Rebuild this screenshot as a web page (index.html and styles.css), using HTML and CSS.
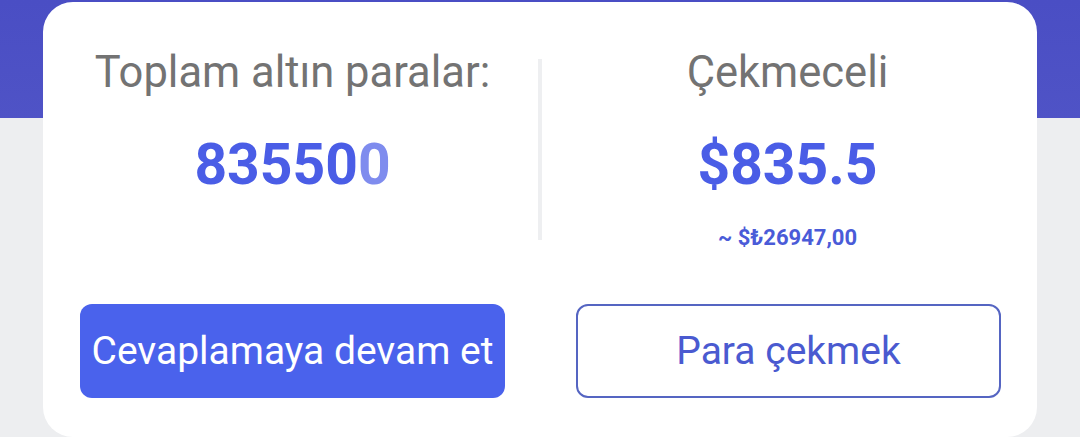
FILE: index.html
```html
<!DOCTYPE html>
<html lang="tr">
<head>
  <meta charset="UTF-8">
  <title>Altın paralar</title>
  <link rel="stylesheet" href="styles.css">
</head>
<body>
  <div class="card">
    <div class="stats">
      <div class="stat">
        <p class="stat-label">Toplam altın paralar:</p>
        <p class="stat-value">83550<span class="fade">0</span></p>
      </div>
      <div class="divider"></div>
      <div class="stat">
        <p class="stat-label">Çekmeceli</p>
        <p class="stat-value">$835.5</p>
        <p class="stat-note">~ $₺26947,00</p>
      </div>
    </div>
    <div class="actions">
      <button class="btn btn-primary">Cevaplamaya devam et</button>
      <button class="btn btn-outline">Para çekmek</button>
    </div>
  </div>
</body>
</html>
```

FILE: styles.css
```css
body {
  margin: 0;
  width: 1080px;
  height: 437px;
  overflow: hidden;
  font-family: Roboto, 'Noto Sans', sans-serif;
  background: linear-gradient(to bottom, #4a4ec4 0, #4f53c6 118px, #edeef0 118px);
}

.card {
  margin: 2px 43px 0;
  height: 435px;
  box-sizing: border-box;
  padding: 46px 36px 0 37px;
  background: #ffffff;
  border-radius: 30px;
}

.stats {
  display: grid;
  grid-template-columns: 425px 4px 425px;
  column-gap: 33px;
  height: 204px;
}

.stat {
  text-align: center;
}

.stat p {
  margin: 0;
}

.stat-label {
  font-size: 43.5px;
  line-height: 50px;
  color: #737373;
}

.stat-value {
  margin-top: 33px !important;
  font-size: 57px;
  line-height: 67px;
  font-weight: bold;
  color: #4a5de6;
}

.fade {
  color: #7f8cee;
}

.stat-note {
  margin-top: 27px !important;
  font-size: 22px;
  line-height: 26px;
  font-weight: bold;
  color: #4a5bd8;
}

.divider {
  margin-top: 11px;
  height: 181px;
  background: #eeeff1;
}

.actions {
  display: grid;
  grid-template-columns: 425px 425px;
  column-gap: 71px;
  margin-top: 52px;
}

.btn {
  height: 94px;
  border-radius: 12px;
  font-family: inherit;
  font-size: 39px;
  cursor: pointer;
}

.btn-primary {
  border: none;
  background: #4a62ec;
  color: #ffffff;
}

.btn-outline {
  border: 2px solid #5565c2;
  background: #ffffff;
  color: #4a5ad0;
}
```
